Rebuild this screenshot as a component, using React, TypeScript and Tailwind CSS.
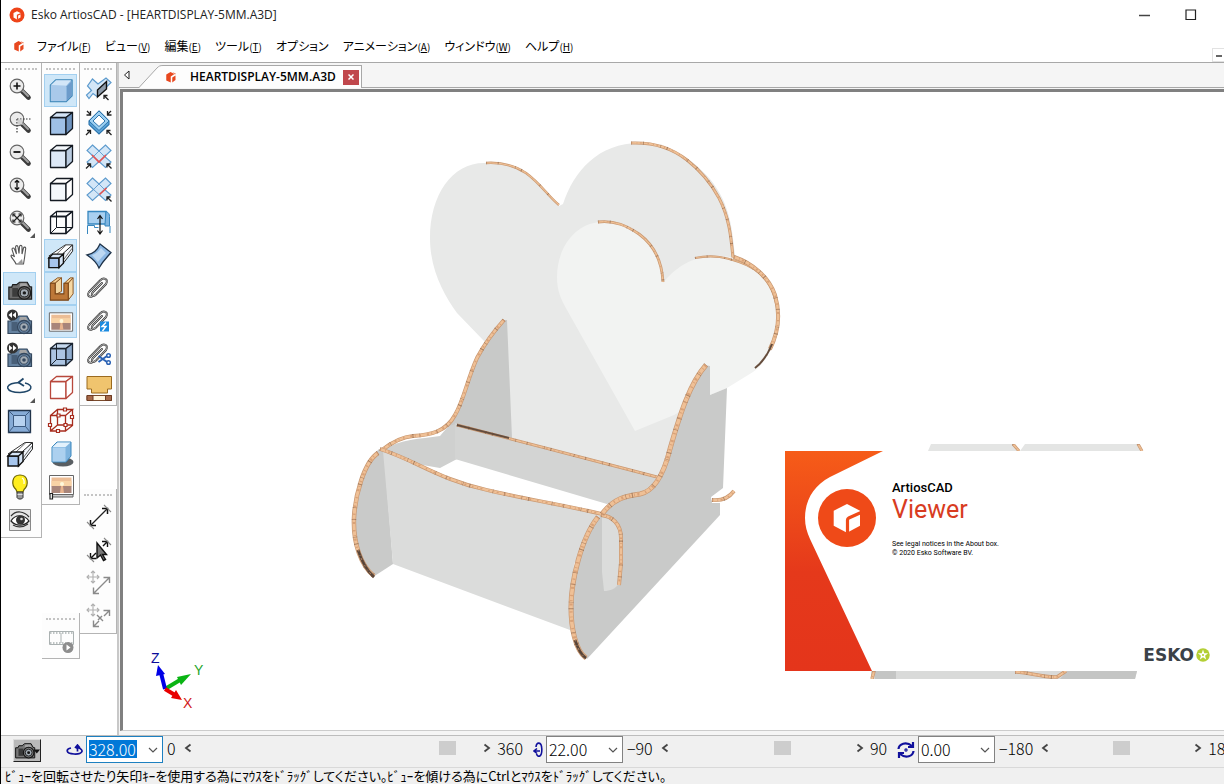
import React from "react";

type Kids = { children?: React.ReactNode };

/* ---------- shared drawing helpers ---------- */

function Ico({ children }: Kids) {
  return (
    <svg viewBox="0 0 32 32" className="block size-8" fill="none" aria-hidden="true">
      {children}
    </svg>
  );
}

function AppLogo({ className, disc }: { className: string; disc?: boolean }) {
  return (
    <svg viewBox="0 0 32 32" className={className} aria-hidden="true">
      {disc && <circle cx="16" cy="16" r="15" fill="#ee4419" />}
      {disc && <path d="M16 8.500 23 12v9l-7 4-7-4v-9Z" fill="#fff" />}
      {disc && <path d="M23.500 13.500 17 16.500V25" fill="none" stroke="#ee4419" strokeWidth="2.500" />}
      {!disc && <path d="M15 6 23 10 15.500 15v12L6.500 23V11Z" fill="#e8481f" />}
      {!disc && <path d="M18.500 17 25 13v9l-6.500 5Z" fill="#e8481f" />}
      {!disc && <path d="M19 6 26 9.500 24 11Z" fill="#f0754f" />}
    </svg>
  );
}

/* ---------- navigation icons ---------- */

function Lens({ children }: Kids) {
  return (
    <Ico>
      <path d="m18 16 6.500 6.500" stroke="#3c3c3c" strokeWidth="4.600" strokeLinecap="round" />
      <path d="m18.500 15.500 5.500 5.500" stroke="#a0a0a0" strokeWidth="2" strokeLinecap="round" />
      <circle cx="13" cy="11" r="6.800" fill="#ececec" stroke="#666" strokeWidth="1.200" />
      {children}
    </Ico>
  );
}
const ZoomInIcon = () => <Lens><path d="M9.500 11h7M13 7.500v7" stroke="#111" strokeWidth="1.600" /></Lens>;
const ZoomOutIcon = () => <Lens><path d="M9.500 11h7" stroke="#111" strokeWidth="1.800" /></Lens>;
const ZoomAreaIcon = () => (
  <Lens>
    <path d="M13 11h14M13 11v14" stroke="#333" strokeWidth="1.200" strokeDasharray="1.500 1.500" />
    <path d="M13.500 11.500h5v5h-5z" fill="#d0d0d0" />
  </Lens>
);
const ZoomScaleIcon = () => (
  <Lens>
    <path d="M13 6.500v9M10.800 8.500 13 6.300l2.200 2.200M10.800 13.500 13 15.700l2.200-2.200" stroke="#111" strokeWidth="1.300" />
  </Lens>
);
const Corner = () => <path d="M31 26v5h-5Z" fill="#555" />;
const ZoomFitIcon = () => (
  <Lens>
    <path d="m9.500 7.500 7 7m0-7-7 7" stroke="#222" strokeWidth="1.200" />
    <path d="M9 9.500V7h2.500M14.500 7H17v2.500M9 12.500V15h2.500M14.500 15H17v-2.500" stroke="#111" strokeWidth="1.200" />
    <Corner />
  </Lens>
);
const HandIcon = () => (
  <Ico>
    <path
      d="M12 24c-1-3-4.500-6-5-8 0-1.500 2-1 3.500 1L8 9.500c0-2 2-2 2.500-.500l2 5-1-7c.3-1.800 2.200-1.800 2.500 0l1 6.500.500-7c.3-1.500 2.300-1.500 2.500 0v7.500l1.500-6c.5-1.500 2.300-1 2.200.500L20.500 18l-1 6Z"
      fill="#fff"
      stroke="#555"
      strokeWidth="1.100"
    />
    <path d="m13 24 6 0-1-5Z" fill="#999" />
  </Ico>
);

function CameraBody({ body, edge }: { body: string; edge: string }) {
  return (
    <g>
      <path d="M5 14h3l1-2.500h4L16 9h8l2.500 4.500 2 .500v12.500H5Z" fill={body} stroke={edge} strokeWidth="1.200" />
      <path d="M17 10h6l2 3.500h-9Z" fill="#a5a5a5" />
      <path d="M8.500 15h6v9h-6z" fill={edge} opacity=".6" />
      <circle cx="21" cy="20" r="6.500" fill={body} stroke={edge} strokeWidth="1.300" />
      <circle cx="21" cy="20" r="4.200" fill="#a4adb5" stroke={edge} />
      <circle cx="21" cy="20" r="1.800" fill={edge} />
    </g>
  );
}
const CameraIcon = () => <Ico><CameraBody body="#6c6c6c" edge="#1c1c1c" /></Ico>;
const CameraPrevIcon = () => (
  <Ico>
    <g transform="translate(-1 1)"><CameraBody body="#6582a0" edge="#35485e" /></g>
    <circle cx="8.500" cy="9" r="5.500" fill="#333" />
    <path d="M8 6v6L4.500 9ZM12 6v6L8.500 9Z" fill="#fff" />
  </Ico>
);
const CameraNextIcon = () => (
  <Ico>
    <g transform="translate(-1 1)"><CameraBody body="#6582a0" edge="#35485e" /></g>
    <circle cx="8.500" cy="9" r="5.500" fill="#333" />
    <path d="M5 6v6l3.500-3ZM9 6v6l3.500-3Z" fill="#fff" />
  </Ico>
);
const SpinIcon = () => (
  <Ico>
    <path d="M21 11c9 2 8 9-5 9.500C1 20.500 0 12.500 11 11l5-.500" stroke="#1f4668" strokeWidth="1.500" />
    <path d="m19.500 6.500-5 4 5.500 3.500" stroke="#1f4668" strokeWidth="1.800" />
    <Corner />
  </Ico>
);
const FrontViewIcon = () => (
  <Ico>
    <path d="M4.500 5.500h22v22h-22z" fill="#86abd6" stroke="#203247" strokeWidth="1.300" />
    <path d="M9.500 10.500h12v11h-12z" fill="#b7d2f0" stroke="#3c5a80" />
    <path d="m4.500 5.500 5 5m12 0 5-5m-5 16 5 6m-22 0 5-6" stroke="#3c5a80" />
  </Ico>
);
const PerspectiveIcon = () => (
  <Ico>
    <path d="m4 16 17-11.500h7L17 17Z" fill="#fff" stroke="#333" />
    <path d="M18.500 24 28.500 11V4.500l-10 9Z" fill="#f2f6fb" stroke="#222" />
    <path d="m12 14 10-9.500M19 20l9-12" stroke="#666" />
    <path d="M4 18h10.500v10H4z" fill="#a6c5ec" stroke="#111" strokeWidth="1.500" />
    <path d="m4 18 4-4h11l-4.500 4ZM14.500 28l4.500-4.500V14l-4.500 4Z" fill="#d7e6f7" stroke="#111" strokeWidth="1.400" />
  </Ico>
);
const BulbIcon = () => (
  <Ico>
    <path d="M12 18.500c-5-4.500-4.500-14.500 4-14.500s9 10 4 14.500l-1 2.500h-6Z" fill="#ffee1f" stroke="#6b6300" strokeWidth="1.200" />
    <path d="M13 21h6v5.500l-1.500 1.500h-3L13 26.500Z" fill="#9a9a9a" stroke="#333" />
    <path d="M13.500 23.500h5" stroke="#ddd" />
    <path d="M18 7c2 1 2.500 3 2 6" stroke="#fff" strokeWidth="1.200" />
  </Ico>
);
const EyeIcon = () => (
  <Ico>
    <path d="M5.500 5.500h21v21h-21z" fill="#e6e6e6" stroke="#888" />
    <path d="M7 17c4-7 13-7 18 0-5 5.500-13 5.500-18 0Z" fill="#fff" stroke="#222" strokeWidth="1.200" />
    <path d="M7 12c5-6 13-5 18 1M9 21c5 3 10 2.500 15-1" stroke="#333" strokeWidth="1.200" />
    <circle cx="16.500" cy="16" r="4.500" fill="#333" />
    <circle cx="17.500" cy="15" r="1.300" fill="#ddd" />
  </Ico>
);

/* ---------- view mode icons ---------- */

type CubeProps = { front: string; top: string; side: string; line: string; wire?: boolean; children?: React.ReactNode };
function Cube({ front, top, side, line, wire, children }: CubeProps) {
  return (
    <Ico>
      <path d="M5.500 9.500H21V26.500H5.500z" fill={front} stroke={line} strokeWidth="1.300" strokeLinejoin="round" />
      <path d="m5.500 9.500 6-5h16L21 9.500Z" fill={top} stroke={line} strokeWidth="1.300" strokeLinejoin="round" />
      <path d="m21 9.500 6.500-5v16L21 26.500Z" fill={side} stroke={line} strokeWidth="1.300" strokeLinejoin="round" />
      {wire && <path d="M11.500 4.500v16h16m-16 0-6 6" stroke={line} />}
      {children}
    </Ico>
  );
}
const SolidIcon = () => (
  <Ico>
    <path d="M5.500 10 11 4.500h17V21l-6 6H5.500Z" fill="#8db8e0" stroke="#3f88b8" strokeWidth="1.200" strokeLinejoin="round" />
    <path d="M6 10.500h16v16H6z" fill="#a9c9ea" />
    <path d="m6 10 5.500-5H27l-5 5.500Z" fill="#d3e6f8" />
    <path d="M22.500 11v15L27.500 20.500V6Z" fill="#6c9bcb" />
  </Ico>
);
const SolidLinesIcon = () => <Cube front="#9fc0e6" top="#d3e3f5" side="#6e93bf" line="#141a22" />;
const PaleIcon = () => <Cube front="#dde9f7" top="#f4f8fc" side="#b9cbe0" line="#141a22" />;
const HiddenIcon = () => <Cube front="#f4f8fc" top="#fff" side="#fff" line="#141a22" />;
const WireIcon = () => <Cube front="none" top="none" side="none" line="#141a22" wire />;
const GlassIcon = () => <Cube front="#abc4e2" top="#c5d8ee" side="#8eabcd" line="#1b2430" wire />;
const RedIcon = () => <Cube front="#fff" top="#fff" side="#fff" line="#b8483c" />;
const NodesIcon = () => (
  <Ico>
    <path d="M5.500 10.500h15V26h-15zM5.500 10.500l7-6h15l-7 6M27.500 4.500v16L20.500 26M12.500 4.500v15.500h15m-15 0-7 6" stroke="#a82c1e" strokeWidth="1.300" />
    <g fill="#fff" stroke="#a82c1e" strokeWidth="1.200">
      <path d="M18.500 3h3v3h-3zM12 9h3v3h-3zM25.500 10.500h3v3h-3zM3.500 18.500h3v3h-3zM19 18.500h3v3h-3zM11.500 24.500h3v3h-3z" />
    </g>
  </Ico>
);
const ThicknessIcon = () => (
  <Ico>
    <path d="M5.500 10 13 4.500h4L10.500 10Z" fill="#f2cd90" stroke="#8a5523" />
    <path d="M20 10 26 4.500h3L24.500 10Z" fill="#f2cd90" stroke="#8a5523" />
    <path d="M10.500 10 17 4.500v14L10.500 22Z" fill="#f2d49d" stroke="#8a5523" />
    <path d="m24 10 5-5.500V21l-5 6.500Z" fill="#f6d8a3" stroke="#8a5523" />
    <path d="M5.500 10h5v11h9V10H24v17.500H5.500Z" fill="#bd7838" stroke="#7a4517" strokeWidth="1.100" />
  </Ico>
);
function Sunset({ y }: { y: number }) {
  return (
    <g transform={`translate(0 ${y})`}>
      <path d="M4.500 6.500h24v19h-24z" fill="#fff" stroke="#666" />
      <path d="M6.500 8.500h20v9h-20z" fill="#ecbd95" />
      <path d="M6.500 12h20v5h-20z" fill="#f8d3a6" />
      <path d="M6.500 17h20v7h-20z" fill="#a8857a" />
      <path d="M16 17h2l1 7h-4z" fill="#e9b48e" />
      <circle cx="17" cy="15" r="2" fill="#fff9dc" />
    </g>
  );
}
const BackdropIcon = () => <Ico><Sunset y={0} /></Ico>;
const BackdropScrollIcon = () => (
  <Ico>
    <Sunset y={-2} />
    <path d="M6 23.500h22v2.500H6z" fill="#ccc" stroke="#666" />
    <path d="M5 22.500h2.500v5.500H5z" fill="#fff" stroke="#222" strokeWidth="1.200" />
  </Ico>
);
const ShadowIcon = () => (
  <Ico>
    <ellipse cx="18" cy="24" rx="10.500" ry="4.500" fill="#3c4247" opacity=".85" />
    <path d="M7 9 12 4h14v14l-5 6H7Z" fill="#7fb4df" stroke="#3b87bd" />
    <path d="M7.500 9.500h13v14h-13z" fill="#acd0ef" />
    <path d="m7.500 9 5-4.500h13L20.500 9Z" fill="#e3f1fc" />
  </Ico>
);

/* ---------- fold icons ---------- */

function Ribbons() {
  return (
    <g stroke="#5c9acd">
      <path d="M9.500 4 16 10 22.500 4 28 9.500 21.500 15.500 28 21l-5.500 5.500L16 20.500 9.500 26.500 4 21l6.500-5.500L4 9.500Z" fill="#d3e6f7" strokeWidth="1.100" />
      <path d="m16 10 5.500 5.500-5.500 5-5.500-5Z" strokeWidth=".9" />
    </g>
  );
}
const ArrowNW = ({ x, y }: { x: number; y: number }) => (
  <path d={`M${x + 4.500} ${y + 4.500}l-4-4M${x} ${y + 3.500}V${y}h3.500`} stroke="#222" strokeWidth="1.300" />
);
const ArrowNE = ({ x, y }: { x: number; y: number }) => (
  <path d={`M${x - 4.500} ${y + 4.500}l4-4M${x} ${y + 3.500}V${y}h-3.500`} stroke="#222" strokeWidth="1.300" />
);
const FoldPanelIcon = () => (
  <Ico>
    <path d="M9.500 4 15 9 23 3l5 4.500L14 21.500l-4-3-4 5-2.500-3.500 5-4.500-4-4.500Z" fill="#d3e6f7" stroke="#5c9acd" strokeWidth="1.200" />
    <path d="m14.500 15 9-8.500v7.500l-9 8Z" fill="#8e9cab" stroke="#111" strokeWidth="1.400" />
    <ArrowNW x={21} y={20.5} />
  </Ico>
);
const FoldAllIcon = () => (
  <Ico>
    <path d="m16 3 10 10v3.500L16 26 6 16.500V13Z" fill="#5ba3d8" stroke="#2d75ad" strokeWidth="1.100" />
    <path d="m16 3 10 10-10 9.500L6 13Z" fill="#9ed0f2" stroke="#2d75ad" />
    <path d="m16 7 6 6-6 5.500L10 13Z" fill="#fff" stroke="#2d75ad" />
    <path d="m4 3 3.500 3.500M7.500 3v4h-4M28 3l-3.500 3.500M24.500 3v4h4" stroke="#222" strokeWidth="1.300" />
    <ArrowNE x={7.5} y={22.5} />
    <ArrowNW x={24} y={22.5} />
  </Ico>
);
const FoldAngleIcon = () => (
  <Ico>
    <Ribbons />
    <path d="m9 14 7 7 7-7" stroke="#e05252" strokeWidth="1.700" />
    <ArrowNE x={7.5} y={23} />
    <ArrowNW x={24} y={23} />
  </Ico>
);
const UnfoldIcon = () => (
  <Ico>
    <Ribbons />
    <path d="m16.500 20.500 7-6.500" stroke="#e05252" strokeWidth="1.700" />
    <ArrowNW x={24} y={23} />
  </Ico>
);
const MoveIcon = () => (
  <Ico>
    <path d="M5 4.500h18V17H5z" fill="#a9d0f0" stroke="#3787bf" strokeWidth="1.300" />
    <path d="M23 4.500c3 1 3.500 3 3.500 5v9.500H22V17Z" fill="#7fb5e0" stroke="#3787bf" />
    <path d="M4.500 27v-8.500h7v2h4M27 26v-7" stroke="#3787bf" />
    <path d="M17 8.500v18M14.500 12l2.500-3.500 2.500 3.500M14.500 23.500 17 27l2.500-3.500" stroke="#111" strokeWidth="1.200" />
  </Ico>
);
const CurveIcon = () => (
  <Ico>
    <path d="M4 15C10 14 14 11 17 4l11 8.500c-3 4-7 7-12 15.500-2-5-6-9-12-13Z" fill="#8db8e4" stroke="#1d3147" strokeWidth="1.300" />
    <path d="M9 15c4-1 7-4 9-7l5 5c-3 3-5 5-8 9Z" fill="#bdd8f2" />
  </Ico>
);
function Clip() {
  return (
    <g fill="none" strokeLinecap="round">
      <path d="M9 23.500c-4 1-5-2-3-4.500L17 7.500c4-4 9-1 6 3.500L13 21.500c-3 3-5.500.5-3-2.500L19 10" stroke="#3a3a3a" strokeWidth="2" />
      <path d="M9 23.500c-4 1-5-2-3-4.500L17 7.500c4-4 9-1 6 3.500L13 21.500c-3 3-5.500.5-3-2.500L19 10" stroke="#e6e6e6" strokeWidth=".7" />
    </g>
  );
}
const ClipIcon = () => <Ico><Clip /></Ico>;
const ClipZapIcon = () => (
  <Ico>
    <Clip />
    <path d="M17 15.500h9v10h-9z" fill="#1b8be0" />
    <path d="m23 16.500-4 4h4L19.500 25" stroke="#fff" strokeWidth="1.400" />
  </Ico>
);
const ClipCutIcon = () => (
  <Ico>
    <Clip />
    <path d="m15.500 17 8.500 6M15.500 23l8.500-6" stroke="#2b62b4" strokeWidth="2" />
    <circle cx="25.500" cy="16.500" r="1.800" stroke="#2b62b4" strokeWidth="1.500" fill="#fff" />
    <circle cx="25.500" cy="23.500" r="1.800" stroke="#2b62b4" strokeWidth="1.500" fill="#fff" />
  </Ico>
);
const ProfileIcon = () => (
  <Ico>
    <path d="M4 4.500h24.500v12.500h-4v4h-16v-4H4Z" fill="#f0c46e" stroke="#9a6a1f" />
    <path d="M4 23.500h24.500v5H4z" fill="#fff4dc" stroke="#7a4a2c" />
    <path d="M4 23.500h6v5H4zM22.500 23.500h6v5h-6z" fill="#a86a4a" stroke="#6c3b22" />
  </Ico>
);

/* ---------- dimension and animation icons ---------- */

const MeasureIcon = () => (
  <Ico>
    <path d="M8 24 24 8" stroke="#222" strokeWidth="1.200" />
    <path d="M19 7.500h5.500V13M13 24.500H7.500V19" stroke="#111" strokeWidth="1.500" />
    <path d="m21 4 7 7M4 21l7 7" stroke="#888" strokeWidth="1.100" />
  </Ico>
);
const MeasureAngleIcon = () => (
  <Ico>
    <path d="m8 24 5-5M20 12l4-4M19 7.500h5.500V13M13 24.500H7.500V19" stroke="#111" strokeWidth="1.400" />
    <path d="m21 4 7 7M4 21l7 7" stroke="#888" strokeWidth="1.100" />
    <path d="M14 9v15l3.500-3 3 5.500 2-1-3-5h4Z" fill="#777" stroke="#111" strokeWidth="1.400" />
  </Ico>
);
const Cross4 = () => (
  <path
    d="M10 4v12M4 10h12M8 6l2-2 2 2M8 14l2 2 2-2M6 8l-2 2 2 2M14 8l2 2-2 2"
    stroke="#b0b0b0"
    strokeWidth="1.100"
  />
);
const MoveDimIcon = () => (
  <Ico>
    <Cross4 />
    <path d="M11 26 26 11M20.500 10.500h6V16M10.500 20.500v6H16" stroke="#8a8a8a" strokeWidth="1.400" />
  </Ico>
);
const MoveAngleIcon = () => (
  <Ico>
    <Cross4 />
    <path d="m11 26 5-5m5-5 5-5M20.500 10.500h6V16M10.500 20.500v6H16M14 15l6 6M15 20l4-4" stroke="#8a8a8a" strokeWidth="1.400" />
  </Ico>
);
const FilmIcon = () => (
  <Ico>
    <path d="M4.500 6.500h24v13h-24zM16 8v10" stroke="#aab1b1" />
    <path d="M5 8h23M5 18h23" stroke="#aab1b1" strokeWidth="1.500" strokeDasharray="1.500 1.500" />
    <circle cx="23" cy="22.500" r="5.500" fill="#8d8d8d" />
    <path d="M21.500 19.500v6l4-3Z" fill="#fff" />
  </Ico>
);

/* ---------- toolbars ---------- */

type Tool = { label: string; icon: () => React.ReactElement; on?: boolean };

const NAV_TOOLS: Tool[] = [
  { label: "Zoom in", icon: ZoomInIcon },
  { label: "Zoom to area", icon: ZoomAreaIcon },
  { label: "Zoom out", icon: ZoomOutIcon },
  { label: "Scale", icon: ZoomScaleIcon },
  { label: "Scale to fit", icon: ZoomFitIcon },
  { label: "Pan", icon: HandIcon },
  { label: "Camera", icon: CameraIcon, on: true },
  { label: "Previous camera", icon: CameraPrevIcon },
  { label: "Next camera", icon: CameraNextIcon },
  { label: "Spin", icon: SpinIcon },
  { label: "Front view", icon: FrontViewIcon },
  { label: "Perspective view", icon: PerspectiveIcon },
  { label: "Light", icon: BulbIcon },
  { label: "View options", icon: EyeIcon },
];
const MODE_TOOLS: Tool[] = [
  { label: "Solid", icon: SolidIcon, on: true },
  { label: "Solid with lines", icon: SolidLinesIcon },
  { label: "Pale solid", icon: PaleIcon },
  { label: "Hidden lines", icon: HiddenIcon },
  { label: "Wire frame", icon: WireIcon },
  { label: "Perspective", icon: PerspectiveIcon, on: true },
  { label: "Board thickness", icon: ThicknessIcon, on: true },
  { label: "Backdrop", icon: BackdropIcon, on: true },
  { label: "Transparent", icon: GlassIcon },
  { label: "Outline", icon: RedIcon },
  { label: "Outline points", icon: NodesIcon },
  { label: "Shadow", icon: ShadowIcon },
  { label: "Floor backdrop", icon: BackdropScrollIcon },
];
const FOLD_TOOLS: Tool[] = [
  { label: "Fold panel", icon: FoldPanelIcon },
  { label: "Fold all", icon: FoldAllIcon },
  { label: "Fold angle", icon: FoldAngleIcon },
  { label: "Unfold", icon: UnfoldIcon },
  { label: "Move", icon: MoveIcon },
  { label: "Curve", icon: CurveIcon },
  { label: "Attach", icon: ClipIcon },
  { label: "Quick attach", icon: ClipZapIcon },
  { label: "Detach", icon: ClipCutIcon },
  { label: "Profile", icon: ProfileIcon },
];
const DIM_TOOLS: Tool[] = [
  { label: "Distance", icon: MeasureIcon },
  { label: "Angle", icon: MeasureAngleIcon },
  { label: "Move distance", icon: MoveDimIcon },
  { label: "Move angle", icon: MoveAngleIcon },
];
const FILM_TOOLS: Tool[] = [{ label: "Play animation", icon: FilmIcon }];

function ToolBar({ label, tools }: { label: string; tools: Tool[] }) {
  return (
    <div role="toolbar" aria-label={label} className="flex flex-col border-r border-b border-[#b4b4b4] bg-[#fdfdfd] pb-px">
      <div className="flex h-[11px] w-full items-center px-1">
        <div className="w-full border-t-2 border-dotted border-[#c4c4c4]" />
      </div>
      {tools.map(({ label: name, icon: Icon, on }) => (
        <button
          key={name}
          type="button"
          aria-label={name}
          aria-pressed={!!on}
          className={
            on
              ? "ml-0.5 flex size-[33px] items-center justify-center border border-[#a3d0f0] bg-[#cfe7f8]"
              : "ml-0.5 flex size-[33px] items-center justify-center"
          }
        >
          <Icon />
        </button>
      ))}
    </div>
  );
}

/* ---------- 3D view ---------- */

function Edge({ d, w = 4, dark }: { d: string; w?: number; dark?: boolean }) {
  return (
    <g fill="none">
      <path d={d} stroke={dark ? "#6f5442" : "#c99871"} strokeWidth={w} />
      <path d={d} stroke={dark ? "#55443a" : "#efc096"} strokeWidth={w - 1.4} />
      <path d={d} stroke="#6d4a34" strokeWidth={w} strokeDasharray=".7 11 .9 17 .6 6 1.100 23" opacity=".5" />
      <path d={d} stroke="#d39a70" strokeWidth={w - 2} strokeDasharray="1.300 4 .8 2.500 2 6" opacity=".8" />
    </g>
  );
}

function Scene() {
  return (
    <svg viewBox="123 92 1101 638" preserveAspectRatio="xMinYMin meet" className="block size-full" role="img" aria-label="HEARTDISPLAY-5MM">
      <path
        d="M487 163C453 161 430 194 430 238c0 32 14 57 27 75l27 28 28 97 150 40 73-223c-3-25-4-50-25-76-19-22-43-36-70-36-42 0-66 28-77 61l-4 2c-9-9-18-24-34-34-14-9-25-10-38-9Z"
        fill="#e8e9e8"
      />
      <Edge d="M486 163c16-1 28 2 40 10 14 10 23 24 33 32" w={2.500} />
      <Edge d="M631 143c24-1 41 5 56 17 14 11 24 23 32 38 10 19 12 38 14 60" w={3} />
      <path
        d="M600 222C574 224 557 249 557 277c0 14 4 22 10 33l68 121 39-16 36-20 17-7 26-16c16-12 25-32 25-55 0-18-11-38-25-49-12-9-25-13-40-12-22 1-38 12-50 27-3-26-12-40-28-52-11-8-22-10-35-9Z"
        fill="#f2f3f2"
      />
      <Edge d="M598 222c17-2 29 4 41 12 15 11 23 28 24 48" w={2.800} />
      <Edge d="M695 258c19-4 32 0 44 4 18 6 30 18 35 34 7 22 4 38-4 54" w={2.200} />
      <Edge d="M734 257c18 6 35 20 41 38 6 20 3 38-5 54" w={4} />
      <Edge d="M772 344c-4 10-9 18-17 24" w={2} dark />

      <path d="M384 450c16-11 36-11 56-14l17-20v43l-17 9-35-6Z" fill="#cfd0cf" />
      <path d="M505 320h2l5 118-55-14-9 2c12-17 13-38 31-68 6-13 14-25 26-38Z" fill="#c8c9c8" />
      <path d="m455 423 202 54-9 14-32 9-9 4-152-45Z" fill="#d3d4d3" />
      <Edge d="m457 425 200 52" w={3} />
      <Edge d="m457 425 52 13" w={2} dark />
      <Edge d="M504 320c-10 11-19 23-27 38-10 22-13 42-22 57-9 17-25 20-42 21-12 1-22 7-31 14" w={4} />

      <path d="m379 449 5 2 9 113-20 13c-14-10-20-37-19-57 2-32 9-56 25-71Z" fill="#c9cac9" />
      <path d="M383 451c32 11 58 29 104 39 38 9 77 15 115 24l-28 50-4 66-177-66Z" fill="#dbdcdb" />
      <Edge d="M378 453c-14 9-23 43-24 65-1 25 7 48 20 58" w={4.500} />
      <Edge d="M358 550c4 12 9 21 16 27" w={3} dark />
      <Edge d="M380 449c35 11 60 31 107 41 38 9 77 15 115 24" w={3.800} />

      <path
        d="m705 365 5 1v29l17-7-4 100-12 9 1 6h8v12L587 659c-10-5-17-35-16-47 1-37 14-78 31-98 13-19 27-15 38-20 15-8 21-22 28-42 9-30 19-65 37-87Z"
        fill="#c9cac9"
      />
      <path d="M602 515c12 2 18 9 19 22l-2 46c-3 6-9 8-15 8l-2-19Z" fill="#dbdcdb" />
      <Edge d="M598 517c-17 21-27 65-27 90 0 20 4 43 15 51" w={5} />
      <Edge d="M575 640c3 9 6 15 11 18" w={3} dark />
      <Edge d="M601 515c11 1 20 9 20 23v25l-2 22" w={4} />
      <Edge d="M602 514c12-16 24-18 38-20 16-3 25-25 30-45 10-35 20-66 36-84" w={5} />
      <Edge d="M712 500c9 1 16-1 22-9" w={3.800} />

      <g fill="none" strokeWidth="4">
        <path d="m165 689 15-9" stroke="#0ab414" />
        <path d="m165 689-4-16" stroke="#0000e6" />
        <path d="m165 689 10 6" stroke="#e80000" />
      </g>
      <path d="m191 674-14 3 4 8Z" fill="#0ab414" />
      <path d="m158 665-2 11 9-2Z" fill="#0000e6" />
      <path d="m182 700-6-10-5 8Z" fill="#e80000" />
      <g fontFamily="Liberation Sans, Arial, sans-serif" fontSize="14">
        <text x="151" y="663" fill="#0c0c9a">Z</text>
        <text x="194" y="675" fill="#25a52b">Y</text>
        <text x="183" y="708" fill="#cf2020">X</text>
      </g>
    </svg>
  );
}

function Splash() {
  return (
    <aside aria-label="ArtiosCAD Viewer" className="absolute right-0 bottom-[51px] h-[235px] w-[439px]">
      <svg viewBox="0 0 439 235" className="absolute inset-0 size-full" aria-hidden="true">
        <defs>
          <linearGradient id="flame" x1="0" y1="0" x2="0" y2="1">
            <stop offset="0" stopColor="#f65c18" />
            <stop offset=".55" stopColor="#e5391b" />
            <stop offset="1" stopColor="#e4351b" />
          </linearGradient>
        </defs>
        <path d="M146 0h83l6 7h-92ZM240 0h112l5 7H235Z" fill="#e4e5e4" />
        <Edge d="m228 0 6 7" w={3} />
        <Edge d="m353 0 4 7" w={3} />
        <path d="M86 227h266l-2 8H86Z" fill="#d9dad9" />
        <path d="M90 227h21v8H90ZM282 227h70l-2 8h-75Z" fill="#c4c5c4" />
        <Edge d="m89 227-2 8" w={3.500} />
        <Edge d="M230 228c14 0 28 6 42 5l9-6" w={3.500} />
        <path d="M0 7h439v220H0z" fill="#fff" />
        <path d="M0 7h98L45 33C28 42 20 57 20 74c0 8 2 14 5 21l62 132H0Z" fill="url(#flame)" />
        <circle cx="62" cy="74" r="29" fill="#ef4a18" />
        <path d="m62 60 13 6.700v15L62 88.700l-13.300-7v-15Z" fill="#fff" />
        <path d="M76 68.500 63.800 74c-1 .5-1.300 1-1.300 2v13" fill="none" stroke="#ef4a18" strokeWidth="3.200" />
      </svg>
      <div className="relative flex h-full flex-col pt-9 pr-3.5 pb-3.5 pl-[107px] font-['Roboto',sans-serif]">
        <p className="text-[13px] leading-4 font-medium text-black">ArtiosCAD</p>
        <p className="text-[25px] leading-7 text-[#d83c22]">Viewer</p>
        <p className="mt-4 text-[7px] leading-[9px] text-black">
          See legal notices in the About box.
          <br />© 2020 Esko Software BV.
        </p>
        <div className="mt-auto flex items-center justify-end gap-0.5">
          <span className="font-['DejaVu_Sans',sans-serif] text-[17px] leading-5 font-bold text-[#3b4248]">ESKO</span>
          <svg viewBox="0 0 26 26" className="size-3.5" aria-hidden="true">
            <circle cx="13" cy="13" r="12.500" fill="#b3cf35" />
            <path d="m13 3 2.300 6.700 7.200.200-5.700 4.300 2 7L13 17l-5.800 4.200 2-7L3.500 9.900l7.200-.2Z" fill="#fff" />
            <circle cx="13" cy="13" r="2" fill="#b3cf35" />
          </svg>
        </div>
      </div>
    </aside>
  );
}

/* ---------- rotation controls ---------- */

const Chevron = () => (
  <svg viewBox="0 0 10 10" className="size-2.5" fill="none" aria-hidden="true">
    <path d="m1 3 4 4 4-4" stroke="#555" strokeWidth="1.200" />
  </svg>
);

const SpinZ = () => (
  <svg viewBox="0 0 17 12" className="h-3 w-[17px] shrink-0" fill="none" stroke="#10109c" strokeWidth="1.700" aria-hidden="true">
    <path d="M5 4C0 5-1 9.500 8 10s10-4 5-6H10M11.500 7.500V1M9 4l2.500-3L14 4" />
  </svg>
);
const SpinX = () => (
  <svg viewBox="0 0 10 18" className="h-[18px] w-2.5 shrink-0" fill="none" stroke="#10109c" strokeWidth="1.600" aria-hidden="true">
    <path d="M3 6C3.500 1 8.500 0 8.800 8S5 17 3.500 13M1 10h6M4 7.500 1 10l3 2.500" />
  </svg>
);
const SpinY = () => (
  <svg viewBox="0 0 18 18" className="size-[18px] shrink-0" fill="none" stroke="#10109c" strokeWidth="2.200" aria-hidden="true">
    <path d="M1.500 8C2 3 9 0 15 5M16.500 10C16 15 9 18 3 13M16 1v5h-5M2 17v-5h5" />
    <circle cx="9" cy="9" r=".6" />
  </svg>
);

type AxisProps = { id: string; label: string; value: string; min: number; max: number; icon: React.ReactNode; active?: boolean; track: string };

function AxisControl({ id, label, value, min, max, icon, active, track }: AxisProps) {
  return (
    <div className={track}>
      {icon}
      <div
        className={
          active
            ? "ml-[3px] flex h-[27px] w-[77px] shrink-0 items-start border border-[#1d80c0] bg-white px-0.5 pt-[3px]"
            : "ml-[3px] flex h-[27px] w-[77px] shrink-0 items-start border border-[#828282] bg-white px-0.5 pt-[3px]"
        }
      >
        <input
          id={id}
          aria-label={label}
          defaultValue={value}
          className={
            active
              ? "h-[18px] w-12 bg-[#0078d7] text-[16px] leading-[18px] font-light text-white outline-none"
              : "h-[18px] w-12 bg-transparent text-[16px] leading-[18px] font-light text-black outline-none"
          }
        />
        <button type="button" aria-label={`${label} list`} className="flex h-5 flex-1 items-center justify-center pl-2">
          <Chevron />
        </button>
      </div>
      <div className="mb-1 flex min-w-0 flex-1 items-center">
        <span className="ml-1 shrink-0 text-[16px] leading-5 font-light">{min < 0 ? `−${-min}` : min}</span>
        <button type="button" aria-label={`Decrease ${label}`} className="ml-2 shrink-0">
          <svg viewBox="0 0 8 10" className="h-2.5 w-2" fill="none" stroke="#444" strokeWidth="1.800"><path d="M6.500 1.500 2 5l4.500 3.500" /></svg>
        </button>
        <input
          type="range"
          aria-label={`${label} slider`}
          min={min}
          max={max}
          step="0.01"
          defaultValue={value}
          className="mx-1 h-4 min-w-0 flex-1 appearance-none bg-transparent [&::-webkit-slider-thumb]:h-3.5 [&::-webkit-slider-thumb]:w-[17px] [&::-webkit-slider-thumb]:appearance-none [&::-webkit-slider-thumb]:bg-[#cdcdcd]"
        />
        <button type="button" aria-label={`Increase ${label}`} className="shrink-0">
          <svg viewBox="0 0 8 10" className="h-2.5 w-2" fill="none" stroke="#444" strokeWidth="1.800"><path d="M1.500 1.500 6 5 1.500 8.500" /></svg>
        </button>
        <span className="ml-1.5 shrink-0 text-[16px] leading-5 font-light">{max}</span>
      </div>
    </div>
  );
}

/* ---------- window ---------- */

const MENUS: [string, string][] = [
  ["ファイル", "F"],
  ["ビュー", "V"],
  ["編集", "E"],
  ["ツール", "T"],
  ["オプション", ""],
  ["アニメーション", "A"],
  ["ウィンドウ", "W"],
  ["ヘルプ", "H"],
];

export default function App() {
  return (
    <div className="flex h-screen flex-col overflow-hidden border-l border-black bg-white font-['Open_Sans','Noto_Sans_CJK_JP',sans-serif] text-black">
      <header className="flex h-[30px] shrink-0 items-center pl-2">
        <AppLogo className="size-4" disc />
        <h1 className="ml-1.5 text-[12px] leading-4 text-[#222]">Esko ArtiosCAD - [HEARTDISPLAY-5MM.A3D]</h1>
        <div className="mr-2.5 ml-auto flex">
          <button type="button" aria-label="Minimize" className="flex h-7 w-[46px] items-center justify-center">
            <svg viewBox="0 0 12 12" className="size-3"><path d="M0 6.500h11" stroke="#444" strokeWidth="1.500" /></svg>
          </button>
          <button type="button" aria-label="Maximize" className="flex h-7 w-[46px] items-center justify-center">
            <svg viewBox="0 0 12 12" className="size-3"><path d="M1 1h9.500v9.500H1z" fill="none" stroke="#222" strokeWidth="1.200" /></svg>
          </button>
        </div>
      </header>

      <nav className="flex h-[33px] shrink-0 items-center border-b border-[#a8a8a8] pl-2.5">
        <AppLogo className="size-4" />
        <ul className="ml-2.5 flex items-center gap-3.5 whitespace-nowrap font-['Noto_Sans_CJK_JP',sans-serif] text-[12px] leading-5 [font-feature-settings:'palt']">
          {MENUS.map(([name, key]) => (
            <li key={name}>
              <button type="button">
                {name}
                {key && <span className="text-[10px]">(<u>{key}</u>)</span>}
              </button>
            </li>
          ))}
        </ul>
        <button type="button" aria-label="Minimize document" className="ml-auto flex h-3.5 w-3 items-end justify-center self-end border border-r-0 border-[#e2e2e2] pb-1">
          <span className="block h-0.5 w-1.5 bg-[#666]" />
        </button>
      </nav>

      <div className="flex min-h-0 flex-1">
        <div className="flex w-[41px] shrink-0 flex-col">
          <ToolBar label="Navigation" tools={NAV_TOOLS} />
        </div>
        <div className="flex w-[38px] shrink-0 flex-col gap-[108px]">
          <ToolBar label="View mode" tools={MODE_TOOLS} />
          <ToolBar label="Animation" tools={FILM_TOOLS} />
        </div>
        <div className="flex w-[37px] shrink-0 flex-col gap-[83px]">
          <ToolBar label="Folding" tools={FOLD_TOOLS} />
          <ToolBar label="Dimensions" tools={DIM_TOOLS} />
        </div>

        <main className="flex min-w-0 flex-1 flex-col border-l-2 border-[#c8c8c8] bg-[#f5f5f5]">
          <div className="flex h-[25px] shrink-0 items-end border-b border-[#a8a8a8]">
            <button type="button" aria-label="Previous tab" className="flex h-full w-4 items-center justify-center">
              <svg viewBox="0 0 8 10" className="h-2.5 w-2"><path d="M6 1v8L1.500 5Z" fill="#fff" stroke="#222" /></svg>
            </button>
            <svg viewBox="0 0 28 23" className="-mb-px h-[23px] w-7" aria-hidden="true">
              <path d="M4 23 22 3c2-2 3-2.500 6-2.500V23Z" fill="#fdfdfd" />
              <path d="M0 22.500h4L22 3c2-2 3-2.500 6-2.500" fill="none" stroke="#a8a8a8" />
            </svg>
            <div className="-mb-px flex h-[23px] items-center border-t border-r border-[#a8a8a8] bg-[#fdfdfd] pr-0.5">
              <AppLogo className="size-4" />
              <span className="ml-[11px] text-[12px] leading-4 font-semibold">HEARTDISPLAY-5MM.A3D</span>
              <button type="button" aria-label="Close tab" className="ml-[7px] flex h-[15px] w-4 items-center justify-center bg-[#c0474c]">
                <svg viewBox="0 0 6 6" className="size-1.5"><path d="m.5.5 5 5m0-5-5 5" stroke="#fff" strokeWidth="1.500" /></svg>
              </button>
            </div>
          </div>
          <div className="mt-px mb-1 ml-px flex min-h-0 flex-1 border-t-3 border-b border-l-3 border-t-[#808080] border-b-[#ccc] border-l-[#808080] bg-white">
            <div className="relative min-w-0 flex-1">
              <Scene />
              <Splash />
            </div>
          </div>
        </main>
      </div>

      <section aria-label="View angle" className="flex h-8 shrink-0 items-start overflow-hidden border-t border-[#bdbdbd] bg-[#f0f0f0] pl-3 font-['Noto_Sans_CJK_JP',sans-serif]">
        <button type="button" aria-label="Camera presets" className="mt-[3px] flex h-[23px] w-7 shrink-0 items-center justify-center border border-[#ddd] border-r-[#222] border-b-[#222] bg-[#b9b9b9]">
          <svg viewBox="3 6 32 24" className="h-5 w-[26px]" fill="none" aria-hidden="true">
            <CameraBody body="#777" edge="#111" />
            <path d="M27 16h8l-4 5Z" fill="#111" />
          </svg>
        </button>
        <div className="ml-[25px] grid min-w-0 flex-1 grid-cols-[467fr_364fr_327fr]">
          <AxisControl id="rz" label="Z rotation" value="328.00" min={0} max={360} icon={<SpinZ />} active track="mr-2.5 flex min-w-0 items-center" />
          <AxisControl id="rx" label="X rotation" value="22.00" min={-90} max={90} icon={<SpinX />} track="mr-2.5 flex min-w-0 items-center" />
          <AxisControl id="ry" label="Y rotation" value="0.00" min={-180} max={180} icon={<SpinY />} track="-mr-2.5 flex min-w-0 items-center" />
        </div>
      </section>

      <footer className="flex h-[17px] shrink-0 items-center overflow-hidden border-t border-[#d9d9d9] bg-[#f0f0f0] pl-1">
        <p className="font-['Noto_Sans_CJK_JP',sans-serif] text-[13px] leading-4 whitespace-nowrap [font-feature-settings:'palt']">
          ﾋﾞｭｰを回転させたり矢印ｷｰを使用する為にﾏｳｽをﾄﾞﾗｯｸﾞしてください。ﾋﾞｭｰを傾ける為にCtrlとﾏｳｽをﾄﾞﾗｯｸﾞしてください。
        </p>
      </footer>
    </div>
  );
}
